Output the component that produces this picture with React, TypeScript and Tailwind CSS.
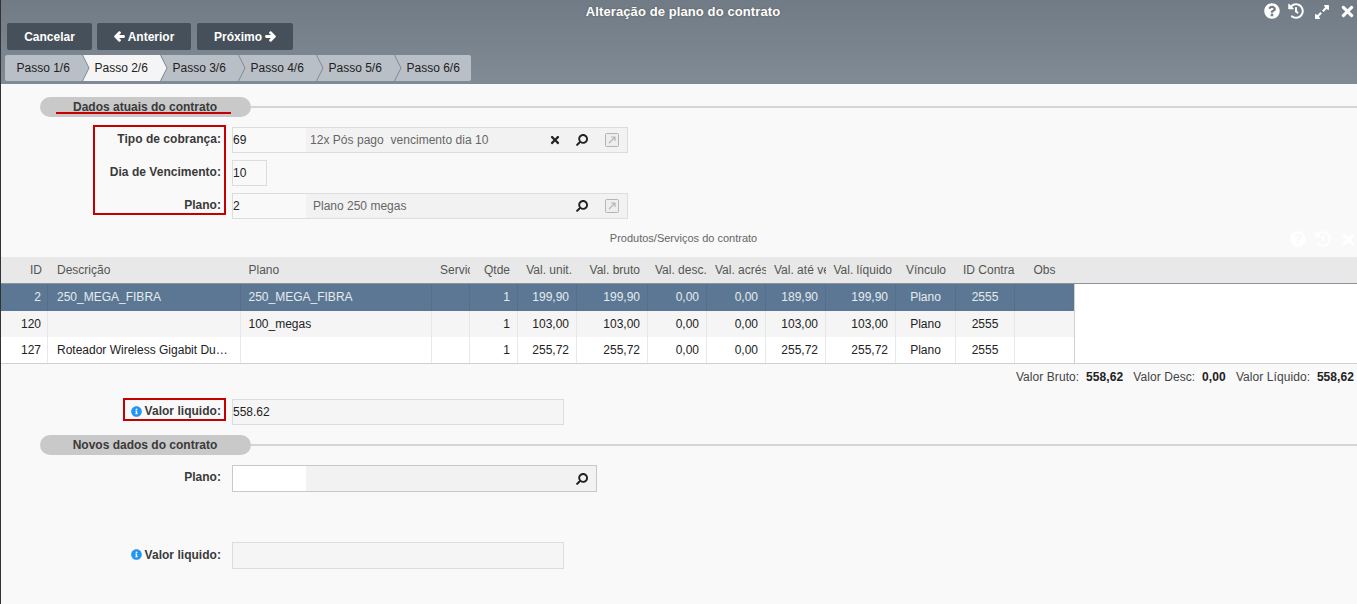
import { FaQuestionCircle, FaHistory, FaTimes, FaArrowLeft, FaArrowRight, FaSearch, FaInfoCircle, FaExpandAlt } from "react-icons/fa";

const W = ["w-[47px]","w-[193px]","w-[191px]","w-[38px]","w-[48px]","w-[59px]","w-[71px]","w-[59px]","w-[59px]","w-[60px]","w-[70px]","w-[60px]","w-[59px]","w-[60px]"];

const head: [string, string][] = [
  ["ID","justify-end pr-[6px]"],["Descrição","pl-[9px]"],["Plano","pl-[7.5px]"],["Servic","pl-[8px]"],["Qtde","justify-end pr-[8px]"],["Val. unit.","justify-end pr-[5px]"],["Val. bruto","justify-end pr-[8px]"],["Val. desc.","pl-[7px]"],["Val. acrés","pl-[8px]"],["Val. até ve","pl-[8px]"],["Val. líquido","pl-[7.5px]"],["Vínculo","justify-center"],["ID Contra","pl-[7px]"],["Obs","pl-[18.5px]"],
];
const align = ["justify-end pr-[6px]","pl-[9px]","pl-[7.5px]","","justify-end pr-[7px]","justify-end pr-[7px]","justify-end pr-[7px]","justify-end pr-[7px]","justify-end pr-[7px]","justify-end pr-[7px]","justify-end pr-[7px]","justify-center","justify-center",""];
const rows = [
  ["2","250_MEGA_FIBRA","250_MEGA_FIBRA","","1","199,90","199,90","0,00","0,00","189,90","199,90","Plano","2555",""],
  ["120","","100_megas","","1","103,00","103,00","0,00","0,00","103,00","103,00","Plano","2555",""],
  ["127","Roteador Wireless Gigabit Du…","","","1","255,72","255,72","0,00","0,00","255,72","255,72","Plano","2555",""],
];
const steps = ["Passo 1/6","Passo 2/6","Passo 3/6","Passo 4/6","Passo 5/6","Passo 6/6"];

function Ext() {
  return (
    <svg width="14" height="14" viewBox="0 0 14 14" className="block">
      <rect x="0.5" y="0.5" width="13" height="13" rx="1" fill="#eeeeee" stroke="#b5b5b5" />
      <path d="M4 10 L10 4 M6 4 H10 V8" fill="none" stroke="#b5b5b5" strokeWidth="1.2" />
    </svg>
  );
}
function Search() {
  return <FaSearch className="text-[12px] text-[#222] -scale-x-100" />;
}
function Section({ title, mark }: { title: string; mark?: boolean }) {
  return (
    <div className="relative flex items-center h-5 pl-[39px]">
      <div className="w-[211px] h-5 rounded-full bg-[#c9c9c9] flex items-center justify-center pr-[1px] text-[12px] font-bold text-[#3a3a3a] shrink-0">{title}</div>
      <div className="flex-1 h-[2px] bg-[#d4d4d4]" />
      {mark && <div className="absolute left-[55px] top-[15px] w-[175px] h-[2px] bg-[#c40000]" />}
    </div>
  );
}
function Label({ children, info, up }: { children: React.ReactNode; info?: boolean; up?: boolean }) {
  return (
    <div className={(up ? "pb-[4px] " : "pb-[2px] ") + "w-[220px] shrink-0 flex items-center justify-end gap-[3px] text-[12px] font-bold text-[#3a3a3a] tracking-[0.03px]"}>
      {info && <FaInfoCircle className="text-[11px] text-[#2196f3]" />}
      <span>{children}</span>
    </div>
  );
}

export default function App() {
  return (
    <div className="w-[1357px] h-[604px] overflow-hidden flex flex-col bg-[#f9f9f9] border-l border-[#333] text-[12px] text-[#222] [font-family:'Liberation_Sans',Arial,sans-serif]">
      {/* header */}
      <div className="h-[84px] shrink-0 bg-gradient-to-b from-[#707b85] to-[#808b95] pl-[4px] flex flex-col relative">
        <div className="h-[23px] flex items-center justify-center text-[13px] font-bold text-white tracking-[0.1px] [text-shadow:0_0_2px_#555] pl-[4px]">Alteração de plano do contrato</div>
        <div className="absolute top-[3px] right-0 flex items-center text-white">
          <FaQuestionCircle className="absolute right-[77px] top-0 text-[16px]" />
          <FaHistory className="absolute right-[53px] top-0 text-[16px]" />
          <FaExpandAlt className="absolute right-[27px] top-[1px] text-[16px]" />
          <FaTimes className="absolute right-[1px] top-0 text-[17px]" />
        </div>
        <div className="flex gap-[5px] pl-[2px] h-[27px] text-white font-bold">
          <div className="w-[85px] rounded-[2px] bg-[#46505a] flex items-center justify-center">Cancelar</div>
          <div className="w-[94px] rounded-[2px] bg-[#46505a] flex items-center justify-center gap-[3px]"><FaArrowLeft className="text-[11px]" stroke="currentColor" strokeWidth={50} />Anterior</div>
          <div className="w-[96px] ml-[1px] rounded-[2px] bg-[#46505a] flex items-center justify-center gap-[3px]">Próximo<FaArrowRight className="text-[11px]" stroke="currentColor" strokeWidth={50} /></div>
        </div>
        <div className="flex mt-[5px] h-[26px]">
          {steps.map((s, i) => (
            <div key={s} className={(i === 1 ? "bg-[#f5f5f5] " : "bg-[#b9bfc7] ") + (i === 0 ? "rounded-l-[2px] " : "") + (i === 5 ? "rounded-r-[2px] w-[76px] " : "w-[78px] ") + "relative flex items-center pl-[11.5px] text-[#222]"} style={{ zIndex: 10 - i }}>
              {s}
              {i < 5 && (
                <svg width="8" height="26" viewBox="0 0 8 26" className="absolute top-0 left-[77px]">
                  <path d="M0 0 L7 13 L0 26 Z" fill={i === 1 ? "#f5f5f5" : "#b9bfc7"} />
                  <path d="M0.5 0 L7 13 L0.5 26" fill="none" stroke="#7e8993" strokeWidth="1" />
                </svg>
              )}
            </div>
          ))}
        </div>
      </div>

      {/* body */}
      <div className="flex flex-col pt-[13px] relative">
        <Section title="Dados atuais do contrato" mark />
        <div className="relative mt-[10px] flex flex-col gap-[7px]">
          <div className="absolute left-[92px] -top-[2px] w-[133px] h-[90px] border-2 border-[#c40000]" />
          <div className="flex h-[26px]">
            <Label>Tipo de cobrança:</Label>
            <div className="ml-[11px] w-[396px] flex border border-[#dddddd] bg-[#f2f2f2] items-center text-[#666]">
              <div className="w-[73px] h-full bg-[#f9f9f9] flex items-center text-[#222]">69</div>
              <span className="pl-[4px] whitespace-pre tracking-[0.03px]">12x Pós pago  vencimento dia 10</span>
              <div className="ml-auto flex items-center">
                <FaTimes className="text-[12px] text-[#222] mr-[15px]" />
                <Search />
                <div className="ml-[17px] mr-[8px]"><Ext /></div>
              </div>
            </div>
          </div>
          <div className="flex h-[26px]">
            <Label>Dia de Vencimento:</Label>
            <div className="ml-[11px] w-[35px] border border-[#dddddd] flex items-center">10</div>
          </div>
          <div className="flex h-[26px]">
            <Label>Plano:</Label>
            <div className="ml-[11px] w-[396px] flex border border-[#dddddd] bg-[#f2f2f2] items-center text-[#666]">
              <div className="w-[73px] h-full bg-[#f9f9f9] flex items-center text-[#222]">2</div>
              <span className="pl-[7px]">Plano 250 megas</span>
              <div className="ml-auto flex items-center">
                <Search />
                <div className="ml-[17px] mr-[8px]"><Ext /></div>
              </div>
            </div>
          </div>
        </div>

        {/* grid caption */}
        <div className="relative h-[38px] flex items-center justify-center text-[11px] text-[#666] pl-[9px]">
          Produtos/Serviços do contrato
          <div className="absolute inset-0 text-white">
            <FaQuestionCircle className="absolute left-[1289px] top-[12px] text-[16px]" />
            <FaHistory className="absolute left-[1314px] top-[12px] text-[16px]" />
            <FaTimes className="absolute left-[1339px] top-[12px] text-[17px]" />
          </div>
        </div>

        {/* table */}
        <div className="flex h-[27px] bg-[#e8e8e8] border-b border-[#8a949e] text-[#555]">
          {head.map(([h, a], i) => (
            <div key={i} className={W[i] + " shrink-0 flex items-center overflow-hidden whitespace-nowrap " + a}>{h}</div>
          ))}
        </div>
        <div className="bg-white h-[80px] border-b border-[#d0d0d0]">
          <div className="w-[1074px] border-r border-[#d0d0d0]">
            {rows.map((r, ri) => (
              <div key={ri} className={"flex " + (ri === 0 ? "h-[27px] bg-[#5b7793] text-white/85" : ri === 1 ? "h-[26px] bg-[#f5f5f5]" : "h-[26px] bg-white")}>
                {r.map((c, i) => (
                  <div key={i} className={W[i] + " shrink-0 flex items-center overflow-hidden whitespace-nowrap border-r last:border-r-0 " + (ri === 0 ? "border-[#547089] pb-[1px] " : "border-[#e8e8e8] ") + align[i]}>{c}</div>
                ))}
              </div>
            ))}
          </div>
        </div>

        {/* totals */}
        <div className="h-[26px] flex items-center justify-end pr-[3px] text-[#444] whitespace-pre tracking-[0.07px]">
          Valor Bruto:  <b className="text-[#222]">558,62</b>   Valor Desc:  <b className="text-[#222]">0,00</b>   Valor Líquido:  <b className="text-[#222]">558,62</b>
        </div>

        {/* valor */}
        <div className="relative flex h-[26px] mt-[9px]">
          <div className="absolute left-[122px] -top-[1px] w-[103px] h-[23px] border-2 border-[#c40000]" />
          <Label info>Valor liquido:</Label>
          <div className="ml-[11px] w-[332px] border border-[#dddddd] bg-[#f5f5f5] flex items-center">558.62</div>
        </div>

        <div className="mt-[10px]"><Section title="Novos dados do contrato" /></div>

        <div className="flex h-[27px] mt-[10px]">
          <Label up>Plano:</Label>
          <div className="ml-[11px] w-[365px] flex border border-[#c8c8c8] bg-[#f2f2f2] items-center">
            <div className="w-[73px] h-full bg-white" />
            <div className="ml-auto mr-[8px] flex items-center"><Search /></div>
          </div>
        </div>

        <div className="flex h-[27px] mt-[50px]">
          <Label info>Valor liquido:</Label>
          <div className="ml-[11px] w-[332px] border border-[#dddddd] bg-[#f5f5f5]" />
        </div>
      </div>
    </div>
  );
}
